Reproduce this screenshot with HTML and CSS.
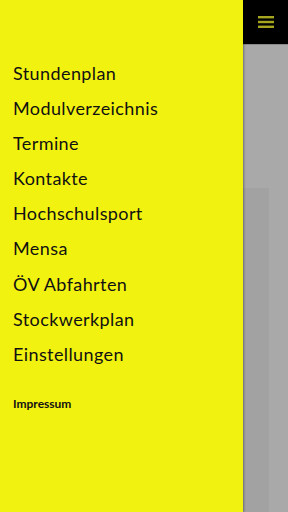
FILE: index.html
```html
<!DOCTYPE html>
<html>
<head>
  <meta name="viewport" content="width=device-width, initial-scale=1" />
  <title>Menu</title>
  <link rel="stylesheet" href="styles.css">
</head>
<body>
  <div class="app">
    <nav class="drawer">
      <ul class="menu">
        <li>Stundenplan</li>
        <li>Modulverzeichnis</li>
        <li>Termine</li>
        <li>Kontakte</li>
        <li>Hochschulsport</li>
        <li>Mensa</li>
        <li>ÖV Abfahrten</li>
        <li>Stockwerkplan</li>
        <li>Einstellungen</li>
      </ul>
      <div class="impressum">Impressum</div>
    </nav>
    <div class="main">
      <div class="topbar">
        <svg width="16" height="12" viewBox="0 0 16 12">
          <rect x="0" y="0" width="16" height="2.4" fill="#a5a51f" />
          <rect x="0" y="4.8" width="16" height="2.4" fill="#a5a51f" />
          <rect x="0" y="9.6" width="16" height="2.4" fill="#a5a51f" />
        </svg>
      </div>
      <div class="content">
        <div class="panel"></div>
      </div>
    </div>
  </div>
</body>
</html>
```

FILE: styles.css
```css
body {
  margin: 0;
  font-family: Lato, "Noto Sans", sans-serif;
}
.app {
  display: flex;
  width: 288px;
  height: 512px;
  overflow: hidden;
}
.drawer {
  width: 243px;
  flex-shrink: 0;
  background: #f2f211;
  padding-top: 61px;
  box-sizing: border-box;
  box-shadow: 1px 0 2px rgba(0, 0, 0, 0.35);
  position: relative;
  z-index: 1;
}
.menu {
  list-style: none;
  margin: 0;
  padding: 0 0 0 13px;
}
.menu li {
  height: 35.1px;
  line-height: 24px;
  font-size: 18px;
  color: #111;
  letter-spacing: 0.4px;
}
.impressum {
  margin-top: 19px;
  padding-left: 13px;
  font-size: 12px;
  font-weight: bold;
  color: #111;
}
.main {
  flex: 1;
  display: flex;
  flex-direction: column;
  background: #a9a9a9;
}
.topbar {
  height: 44px;
  background: #000;
  display: flex;
  align-items: center;
  justify-content: center;
  padding-left: 1px;
  border-bottom: 1px solid #8a8a8a;
}
.content {
  flex: 1;
  padding-top: 143px;
}
.panel {
  width: 26px;
  height: 100%;
  background: #a2a2a2;
}
```
